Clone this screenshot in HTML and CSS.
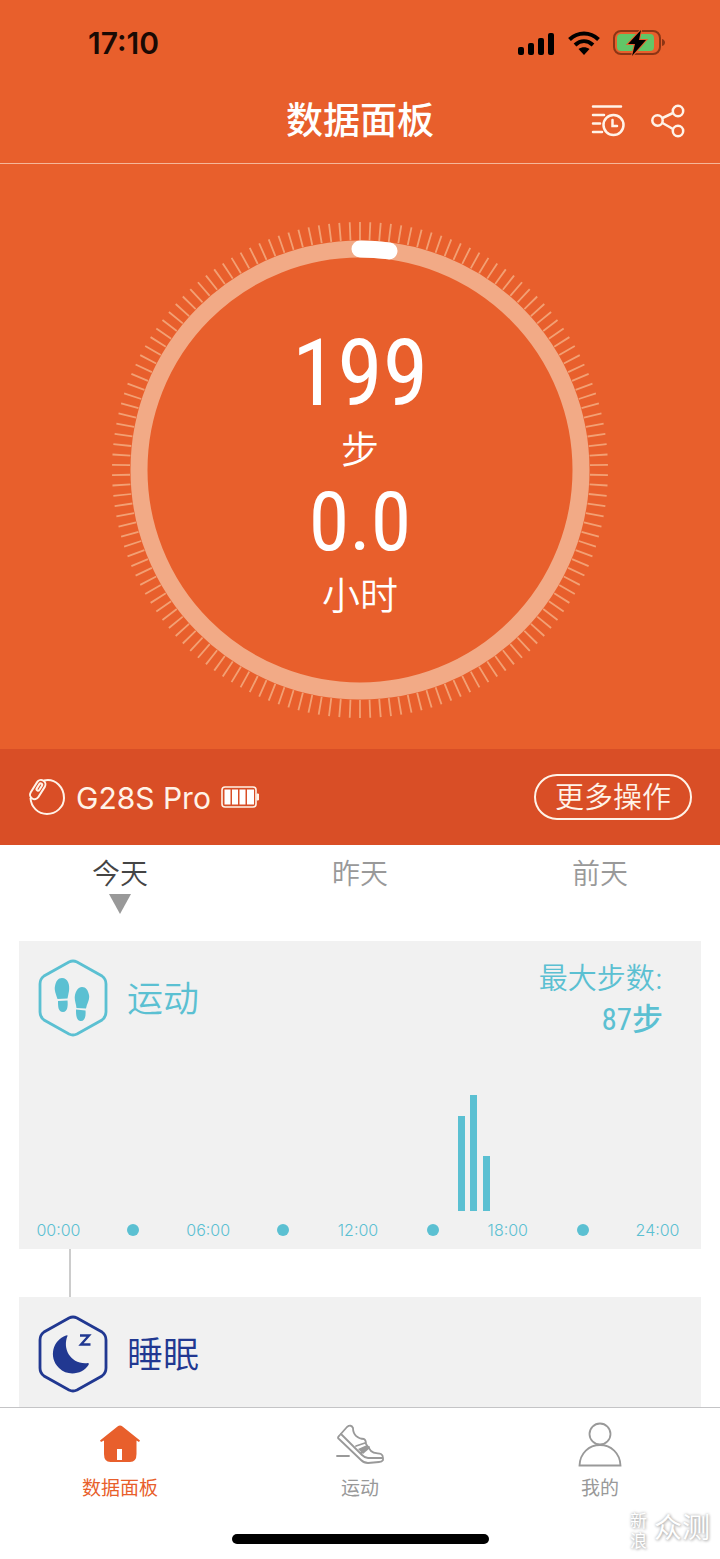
FILE: index.html
```html
<!DOCTYPE html>
<html lang="zh-CN">
<head>
<meta charset="utf-8">
<meta name="viewport" content="width=device-width, initial-scale=1">
<title>数据面板</title>
<link rel="stylesheet" href="styles.css">
</head>
<body>
<div class="app">
  <header class="top">
    <div class="status">
      <time class="clock">17:10</time>
      <div class="status-icons">
        <svg width="38" height="26" viewBox="0 0 38 26"><rect x="1" y="17" width="6" height="8" rx="2"/><rect x="11" y="13" width="6" height="12" rx="2"/><rect x="21" y="8" width="6" height="17" rx="2"/><rect x="31" y="3" width="6" height="22" rx="2"/></svg>
        <svg width="34" height="26" viewBox="0 0 34 26"><g fill="none" stroke="#000" stroke-width="4"><path d="M2.500 9.500C11 1.500 23 1.500 31.500 9.500"/><path d="M8 15C13.500 10 20.500 10 26 15"/></g><path d="M11.500 19C15 16.500 19 16.500 22.500 19L17 25Z"/></svg>
        <svg width="53" height="28" viewBox="0 0 53 28"><rect x="1" y="2" width="46" height="23" rx="7" fill="none" stroke="#8c3515" stroke-width="2"/><path d="M49 10C53 11 53 16 49 17Z" fill="#8c3515"/><rect x="4" y="5" width="37" height="17" rx="4" fill="#62c567"/><path d="M28 1L15 15H22L19 27L33 11H26Z" stroke="#e85f2c" stroke-width="2" paint-order="stroke"/></svg>
      </div>
    </div>
    <div class="nav">
      <h1 class="title">数据面板</h1>
      <div class="actions">
        <button class="icon-btn" type="button" aria-label="历史记录"><svg width="34" height="34" viewBox="0 0 34 34"><g fill="none" stroke="#fff3e8" stroke-width="2.500" stroke-linecap="round"><path d="M2 2.500H30M2 11H13M2 19.500H9M2 28H11"/><circle cx="22.500" cy="21" r="10"/><path d="M21.500 16V22H26"/></g></svg></button>
        <button class="icon-btn" type="button" aria-label="分享"><svg width="34" height="34" viewBox="0 0 34 34"><g fill="none" stroke="#fff3e8" stroke-width="2.500"><circle cx="6.500" cy="16.500" r="5.200"/><circle cx="27" cy="7" r="5.200"/><circle cx="27" cy="27" r="5.200"/><path d="M11.500 14L22 9M11.500 19L22 25"/></g></svg></button>
      </div>
    </div>
  </header>

  <section class="hero" aria-label="今日步数">
    <svg class="dial" viewBox="0 0 496 496"><g fill="none" transform="rotate(-90 248 248)"><circle cx="248" cy="248" r="239" stroke="#f2a074" stroke-width="18" pathLength="150" stroke-dasharray="0.180 0.820" stroke-dashoffset="0.090"/><circle cx="248" cy="248" r="221" stroke="#f2aa86" stroke-width="17"/><circle cx="248" cy="248" r="221" stroke="#fff" stroke-width="17" stroke-linecap="round" pathLength="100" stroke-dasharray="2.100 97.900"/></g></svg>
    <div class="totals">
      <strong class="num num-steps">199</strong>
      <span class="unit">步</span>
      <strong class="num num-hours">0.0</strong>
      <span class="unit">小时</span>
    </div>
  </section>

  <section class="device">
    <svg width="38" height="38" viewBox="0 0 38 38"><g fill="none" stroke="#fff3e8" stroke-width="2"><path d="M16 2.500C28 0 36 10 36 20C36 29 28 36 19 36C10 36 3 29 2.500 20"/><g transform="rotate(32 9.500 12)"><rect x="5" y="1" width="9" height="21" rx="4.500"/><rect x="8" y="4.500" width="3" height="8" rx="1.500"/></g></g></svg>
    <span class="device-name">G28S Pro</span>
    <svg width="38" height="24" viewBox="0 0 38 24"><rect x="1" y="2" width="34" height="20" rx="3" fill="none" stroke="#fff3e8" stroke-width="1.600"/><path d="M36 9h1.500v6H36Z" stroke="#fff3e8" fill="#fff3e8"/><path fill="#fff" d="M3.500 4.500H9.500V19.500H3.500ZM11 4.500H17V19.500H11ZM18.500 4.500H24.500V19.500H18.500ZM26 4.500H33V19.500H26Z"/></svg>
    <button class="more" type="button">更多操作</button>
  </section>

  <nav class="days" aria-label="日期">
    <button class="day day-on" type="button">今天</button>
    <button class="day" type="button">昨天</button>
    <button class="day" type="button">前天</button>
  </nav>

  <main class="feed">
    <article class="card sport">
      <div class="card-head">
        <svg width="70" height="78" viewBox="0 0 70 78"><path d="M31 3Q35 1 39 3L64 17Q68 20 68 25V53Q68 58 64 61L39 75Q35 77 31 75L6 61Q2 58 2 53V25Q2 20 6 17Z" fill="none" stroke="currentColor" stroke-width="2.800"/><g fill="currentColor"><path d="M24 19C30 19 32 26 31 32L29.500 39.500L19.500 40C18 35 16 31 17 27C18 22 20 19 24 19ZM20 42L29.500 41.500C30 46 30 53 25 53C20 53 20 47 20 42Z"/><path d="M44 28C40 28 38 32 37 36C36 41 38 44 38.500 49L48 49.500C49 44 52 41 51 36C50 31 48 28 44 28ZM38 50.500L47.500 51.500C48 57 47 62 43 62C38 62 38 55 38 50.500Z"/></g></svg>
        <h2 class="card-title">运动</h2>
        <p class="peak">最大步数:<span class="peak-value"><b class="peak-num">87</b>步</span></p>
      </div>
      <div class="bars">
        <span class="bar bar-1600" style="height:82%"></span>
        <span class="bar bar-1630" style="height:100%"></span>
        <span class="bar bar-1700" style="height:47%"></span>
      </div>
      <div class="axis">
        <span>00:00</span><i class="dot"></i><span>06:00</span><i class="dot"></i><span>12:00</span><i class="dot"></i><span>18:00</span><i class="dot"></i><span>24:00</span>
      </div>
    </article>
    <div class="link"></div>
    <article class="card sleep">
      <div class="card-head">
        <svg width="70" height="78" viewBox="0 0 70 78"><path d="M31 3Q35 1 39 3L64 17Q68 20 68 25V53Q68 58 64 61L39 75Q35 77 31 75L6 61Q2 58 2 53V25Q2 20 6 17Z" fill="none" stroke="currentColor" stroke-width="2.800"/><path d="M29.500 21C24 34 33 50 50 48C51 48 51 49 50.500 50C45 59 30 62 21 53C10 42 15 25 28 20.500Q30 20 29.500 21Z" fill="currentColor"/><path d="M42 20.500H51L43 29.500H52.500" fill="none" stroke="currentColor" stroke-width="2.400"/></svg>
        <h2 class="card-title">睡眠</h2>
      </div>
    </article>
  </main>

  <footer class="tabs-wrap">
    <nav class="tabs" aria-label="主导航">
      <a class="tab tab-on" href="#"><svg width="48" height="46" viewBox="0 0 48 46"><path d="M21.500 3.500Q24 1.500 26.500 3.500L44 17.500L43 19L40.500 17.500V31Q40.500 39 34 39H14.500Q8 39 8 31V17.500L5 19L4 17.500Z" fill="currentColor"/><path d="M21 26H26V37H21Z" fill="#fff"/></svg>数据面板</a>
      <a class="tab" href="#"><svg width="48" height="46" viewBox="0 0 48 46"><g fill="none" stroke="currentColor" stroke-width="1.800" stroke-linejoin="round" stroke-linecap="round"><path d="M3 13L11 4Q15 1 17 5C17 12 22 16 28 16Q30 17 30 21L35 28C38 31 42 30 45 31Q47 32 47 35V37Q46 39 43 39L32 40Q28 40 25 37L3 16Q1 15 3 13Z"/><path d="M5 11L26 32Q29 35 32 35H46M20 23L29 20M25 30L33 24M1 33H13"/></g><path d="M22 26L31 22L34 25L27 31Z" fill="currentColor"/></svg>运动</a>
      <a class="tab" href="#"><svg width="48" height="46" viewBox="0 0 48 46"><g fill="none" stroke="currentColor" stroke-width="1.800"><circle cx="24" cy="11" r="10.500"/><path d="M3.500 42.500C4 30 13 22 24 22S44 30 44.500 42.500Z"/></g></svg>我的</a>
    </nav>
    <div class="home-bar"></div>
    <p class="mark"><span class="mark-small">新浪</span><span class="mark-big">众测</span></p>
  </footer>
</div>
</body>
</html>
```
FILE: styles.css
```css
* { box-sizing: border-box; }
body {
  margin: 0;
  background: #fff;
  color: #999;
  font-family: Inter, "Noto Sans CJK SC", sans-serif;
}
h1, h2, p { margin: 0; }
button { padding: 0; border: 0; background: none; color: inherit; font: inherit; }
svg { display: block; flex: none; overflow: visible; }
.app { display: flex; flex-direction: column; min-height: 100vh; }

.top { background: #e85f2c; border-bottom: 1px solid #f5b79a; }
.status {
  display: flex; justify-content: space-between; align-items: center;
  height: 84px; padding: 2px 54px 0 88px;
}
.clock { color: #1a0a04; font-size: 30px; font-weight: 600; line-height: 32px; }
.status-icons { display: flex; align-items: center; gap: 12px; }
.nav {
  display: grid; grid-template-columns: 1fr auto 1fr; align-items: center;
  height: 79px; padding: 0 35px 5px;
}
.title { grid-column: 2; color: #fff; font-size: 37px; font-weight: 500; line-height: 48px; }
.actions { display: flex; justify-content: flex-end; gap: 26px; }
.icon-btn { display: block; }

.hero { display: grid; justify-items: center; padding: 58px 20px 31px; background: #e85f2c; }
.dial { grid-area: 1 / 1; width: 100%; max-width: 496px; }
.totals {
  grid-area: 1 / 1; display: flex; flex-direction: column; align-items: center;
  padding-top: 104px; color: #fff;
}
.num { font-family: "Roboto Condensed", "Liberation Sans Narrow", Roboto, sans-serif; font-weight: 400; }
.num-steps { font-size: 92px; line-height: 96px; }
.num-hours { font-size: 82px; line-height: 92px; }
.unit { font-size: 38px; font-weight: 350; line-height: 54px; }

.device {
  display: flex; align-items: center; height: 96px; padding: 0 28px;
  background: #d94e26; color: #fff3e8;
}
.device-name { margin: 0 10px; padding-top: 2px; font-family: Inter, sans-serif; font-size: 30px; font-weight: 400; line-height: 40px; }
.more {
  margin-left: auto; padding: 2px 19px 0; border: 2px solid #fff3e8; border-radius: 24px;
  font-size: 29px; font-weight: 350; line-height: 40px;
}

.days { display: grid; grid-template-columns: repeat(3, 1fr); height: 96px; }
.day {
  display: flex; flex-direction: column; align-items: center; padding-top: 9px;
  font-size: 28px; font-weight: 350; line-height: 40px;
}
.day-on { color: #444; }
.day-on::after {
  content: ""; border: 11px solid transparent; border-top: 20px solid #999; border-bottom: 0;
}

.feed { display: flex; flex: 1; flex-direction: column; padding: 0 19px; }
.card { background: #f1f1f1; }
.card-head { display: flex; align-items: flex-start; padding: 18px 38px 0 19px; }
.card-title { margin-left: 19px; padding-top: 2px; font-size: 36px; font-weight: 350; line-height: 76px; }
.sport { color: #5bc0d2; }
.sleep { flex: 1; color: #213891; }
.peak { margin-left: auto; font-size: 29px; font-weight: 350; line-height: 40px; text-align: right; }
.peak-value { display: block; font-size: 31px; font-weight: 500; line-height: 40px; }
.peak-num { font-family: "Roboto Condensed", "Liberation Sans Narrow", Roboto, sans-serif; font-weight: 400; }
.bars {
  display: grid; grid-template-columns: repeat(48, 1fr); align-items: end;
  height: 116px; margin: 55px 46px 0 36px;
}
.bar { justify-self: center; width: 7px; background: #5bc0d2; }
.bar-1600 { grid-column: 33; }
.bar-1630 { grid-column: 34; }
.bar-1700 { grid-column: 35; }
.axis {
  display: grid; grid-template-columns: repeat(9, 1fr); place-items: center;
  height: 38px; padding: 0 6px 0 2px; font-size: 16px; font-weight: 300; line-height: 20px;
}
.dot { width: 12px; height: 12px; border-radius: 50%; background: #5bc0d2; }
.link { width: 2px; height: 48px; margin-left: 50px; background: #ccc; }

.tabs-wrap { position: relative; height: 152px; border-top: 1px solid #c4c4c6; background: #fff; }
.tabs { display: grid; grid-template-columns: repeat(3, 1fr); padding-top: 15px; }
.tab {
  display: flex; flex-direction: column; align-items: center; gap: 6px;
  color: #999; font-size: 19px; line-height: 28px; text-decoration: none;
}
.tab-on { color: #e85f2c; }
.home-bar { width: 257px; height: 10px; margin: 31px auto 0; border-radius: 5px; background: #000; }
.mark {
  position: absolute; right: 10px; bottom: 8px; display: flex; align-items: center; gap: 6px;
  color: #fff; text-shadow: 0 0 3px #aaa, 1px 1px 3px #bbb;
}
.mark-small { width: 18px; font-size: 17px; line-height: 20px; }
.mark-big { padding-bottom: 6px; font-size: 28px; line-height: 34px; }
```
